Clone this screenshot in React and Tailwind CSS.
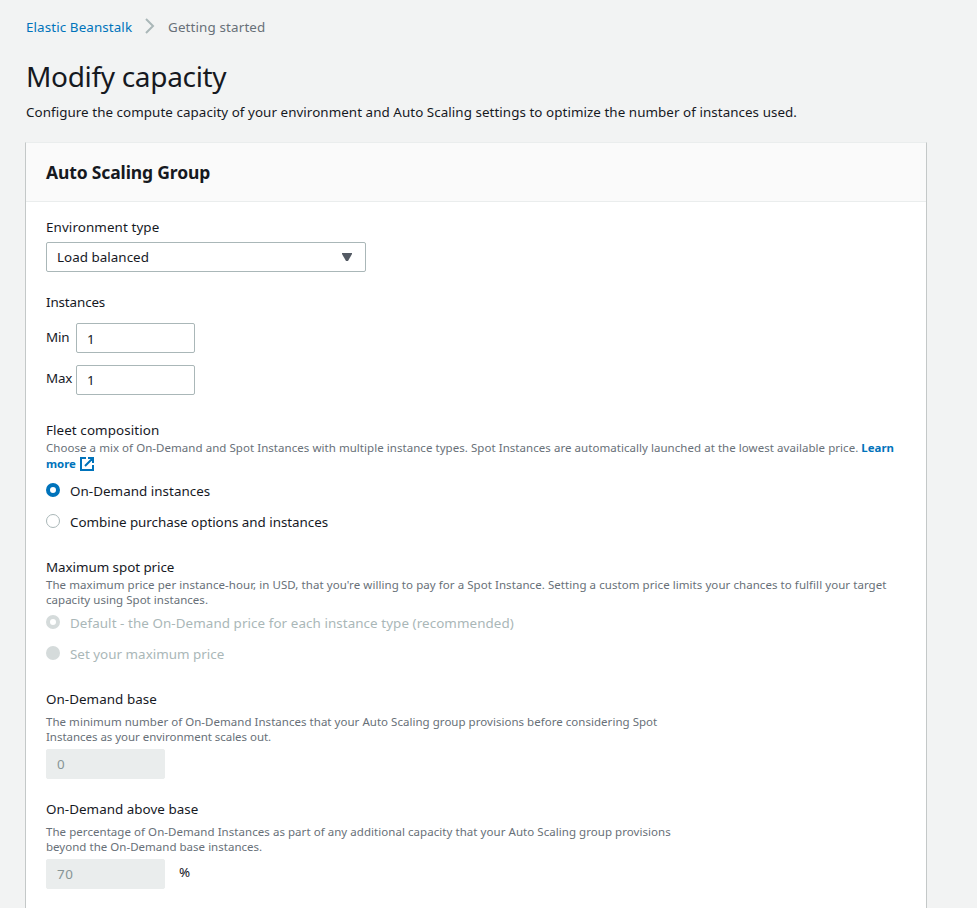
function Label({ className = '', children }) {
  return <div className={`h-5 whitespace-nowrap text-[13.4px] leading-5 ${className}`}>{children}</div>;
}

function Hint({ className = '', children }) {
  return (
    <div className={`h-[15px] whitespace-nowrap text-[11.5px] leading-[15px] text-[#687078] ${className}`}>
      {children}
    </div>
  );
}

function Radio({ dot, text, className, children }) {
  return (
    <div className={`flex h-5 items-start gap-2.5 ${className}`}>
      <span className={`mt-0.5 size-3.5 shrink-0 rounded-full ${dot}`} />
      <Label className={text}>{children}</Label>
    </div>
  );
}

function Field({ className, children }) {
  return (
    <div className={`h-[30px] w-[119px] rounded-[2px] border px-2.5 text-[13.4px] leading-5 ${className}`}>
      {children}
    </div>
  );
}

export default function App() {
  return (
    <div className="flex h-[908px] w-[977px] flex-col overflow-hidden bg-[#f2f3f3] pl-[25px] pt-[17px] font-['Noto_Sans','Open_Sans',sans-serif] text-[#16191f]">
      <nav className="ml-px flex h-5">
        <Label className="w-[106px] tracking-[0.1px] text-[#0073bb]">Elastic Beanstalk</Label>
        <svg className="ml-3 mt-px h-4 w-3" viewBox="0 0 12 16" fill="none" stroke="#aab7b8" strokeWidth="2">
          <path d="M2 1l7 7-7 7" />
        </svg>
        <Label className="ml-3 tracking-[0.14px] text-[#687078]">Getting started</Label>
      </nav>

      <h1 className="ml-px mt-[21px] h-9 whitespace-nowrap text-[28px] leading-9 tracking-[-0.32px]">Modify capacity</h1>
      <Label className="ml-px mt-2 tracking-[0.055px]">
        Configure the compute capacity of your environment and Auto Scaling settings to optimize the number of instances used.
      </Label>

      <section className="mt-5 flex h-[786px] w-[902px] shrink-0 flex-col border-x border-t border-x-[#c4c8c8] border-t-[#eaeded] bg-white">
        <header className="h-[59px] shrink-0 border-b border-[#eaeded] bg-[#fafafa] px-5 pt-[17px]">
          <h2 className="whitespace-nowrap text-[17.5px] font-bold leading-6 tracking-[-0.14px]">Auto Scaling Group</h2>
        </header>

        <div className="flex flex-col px-5 pt-[15px]">
          <Label className="tracking-[0.1px]">Environment type</Label>
          <div className="mt-[5px] flex h-[30px] w-80 items-start justify-between rounded-[2px] border border-[#aab7b8] pl-2.5 pr-[13px] pt-1">
            <Label className="tracking-[0.03px]">Load balanced</Label>
            <svg className="mt-1.5 h-2 w-2.5" viewBox="0 0 10 8" fill="#545b64">
              <path d="M0 0h10v1L6 8H4L0 1z" />
            </svg>
          </div>

          <Label className="mt-5 tracking-[-0.12px]">Instances</Label>
          <div className="mt-[11px] flex h-[30px]">
            <Label className="w-[30px] pt-1 tracking-[-0.2px]">Min</Label>
            <Field className="border-[#aab7b8] pt-[5px]">1</Field>
          </div>
          <div className="mt-3 flex h-[30px]">
            <Label className="w-[30px] pt-[3px] tracking-[-0.2px]">Max</Label>
            <Field className="border-[#aab7b8] pt-1">1</Field>
          </div>

          <Label className="mt-[25px] tracking-[0.09px]">Fleet composition</Label>
          <Hint className="tracking-[0.047px]">
            Choose a mix of On-Demand and Spot Instances with multiple instance types. Spot Instances are automatically launched at the lowest available price.{' '}
            <a className="text-[11.4px] font-bold text-[#0073bb]">Learn</a>
          </Hint>
          <Hint className="mt-px flex">
            <a className="flex gap-1 text-[11.4px] font-bold text-[#0073bb]">
              more
              <svg className="mt-px size-3.5" viewBox="0 0 14 14" fill="none" stroke="#0073bb" strokeWidth="2">
                <path d="M6 1H1v12h12V8M8 1h5v5M12.5 1.5L5 9" />
              </svg>
            </a>
          </Hint>
          <Radio className="mt-2.5" dot="border-4 border-[#0073bb] bg-white" text="tracking-[0.04px]">
            On-Demand instances
          </Radio>
          <Radio className="mt-[11px]" dot="border border-[#aab7b8] bg-white" text="tracking-[-0.025px]">
            Combine purchase options and instances
          </Radio>

          <Label className="mt-[25px] tracking-[-0.05px]">Maximum spot price</Label>
          <Hint className="tracking-[0.06px]">
            The maximum price per instance-hour, in USD, that you&apos;re willing to pay for a Spot Instance. Setting a custom price limits your chances to fulfill your target
          </Hint>
          <Hint className="tracking-[0.03px]">capacity using Spot instances.</Hint>
          <Radio className="mt-1.5" dot="border-4 border-[#d5dbdb] bg-white" text="tracking-[0.075px] text-[#aab7b8]">
            Default - the On-Demand price for each instance type (recommended)
          </Radio>
          <Radio className="mt-[11px]" dot="bg-[#d5dbdb]" text="tracking-[0.015px] text-[#aab7b8]">
            Set your maximum price
          </Radio>

          <Label className="mt-[25px] tracking-[0.05px]">On-Demand base</Label>
          <Hint className="mt-[5px] tracking-[0.03px]">
            The minimum number of On-Demand Instances that your Auto Scaling group provisions before considering Spot
          </Hint>
          <Hint className="tracking-[-0.035px]">Instances as your environment scales out.</Hint>
          <Field className="mt-[5px] border-[#eaeded] bg-[#eaeded] pt-1 text-[#879596]">0</Field>

          <Label className="mt-5 tracking-[0.04px]">On-Demand above base</Label>
          <Hint className="mt-[5px] tracking-[0.05px]">
            The percentage of On-Demand Instances as part of any additional capacity that your Auto Scaling group provisions
          </Hint>
          <Hint className="tracking-[0.02px]">beyond the On-Demand base instances.</Hint>
          <div className="mt-[5px] flex h-[30px] gap-3.5">
            <Field className="border-[#eaeded] bg-[#eaeded] pt-1 tracking-[0.5px] text-[#879596]">70</Field>
            <Label className="pt-[3px]">%</Label>
          </div>
        </div>
      </section>
    </div>
  );
}
